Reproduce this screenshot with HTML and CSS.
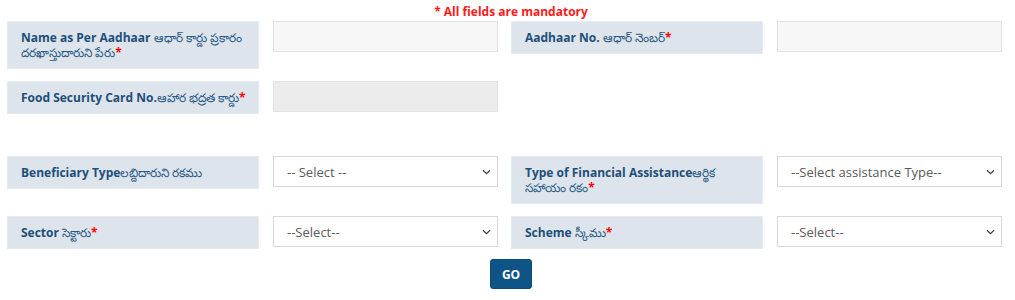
FILE: index.html
```html
<!DOCTYPE html>
<html>
<head>
<meta charset="utf-8">
<link rel="stylesheet" href="styles.css">
</head>
<body>
<div class="page">
  <div class="note">* All fields are mandatory</div>
  <div class="grid">
    <div class="label">Name as Per Aadhaar <span class="te">ఆధార్ కార్డు ప్రకారం దరఖాస్తుదారుని పేరు</span><span class="req">*</span></div>
    <div class="field"><input class="text" type="text"></div>
    <div class="label">Aadhaar No. <span class="te">ఆధార్ నెంబర్</span><span class="req">*</span></div>
    <div class="field"><input class="text" type="text"></div>

    <div class="label">Food Security Card No.<span class="te">ఆహార భద్రత కార్డు</span><span class="req">*</span></div>
    <div class="field"><input class="text disabled" type="text" disabled></div>
    <div class="empty"></div>
    <div class="empty"></div>

    <div class="spacer"></div>

    <div class="label">Beneficiary Type<span class="te">లబ్దిదారుని రకము</span></div>
    <div class="field"><select class="sel"><option>-- Select --</option></select></div>
    <div class="label">Type of Financial Assistance<span class="te">ఆర్థిక సహాయం రకం</span><span class="req">*</span></div>
    <div class="field"><select class="sel"><option>--Select assistance Type--</option></select></div>

    <div class="label">Sector <span class="te">సెక్టారు</span><span class="req">*</span></div>
    <div class="field"><select class="sel"><option>--Select--</option></select></div>
    <div class="label">Scheme <span class="te">స్కీము</span><span class="req">*</span></div>
    <div class="field"><select class="sel"><option>--Select--</option></select></div>
  </div>
  <div class="actions"><button class="go">GO</button></div>
</div>
</body>
</html>
```
FILE: styles.css
```css
html, body {
  margin: 0;
  padding: 0;
  background: #fff;
  font-family: "Open Sans", "Noto Sans", sans-serif;
}
.page {
  width: 1015px;
  padding: 4px 0 0 7px;
  box-sizing: border-box;
}
.note {
  width: 1008px;
  text-align: center;
  color: #ff1a1a;
  font-weight: 700;
  font-size: 12px;
  line-height: 16px;
}
.grid {
  margin-top: 1px;
  display: grid;
  grid-template-columns: 252px 224px 252px 225px;
  column-gap: 14px;
  row-gap: 12px;
  align-items: start;
}
.label {
  background: #dde4eb;
  border: 1px solid #e6ebf0;
  box-sizing: border-box;
  color: #1d4f79;
  font-weight: 700;
  font-size: 12px;
  line-height: 15px;
  padding: 8px 8px 8px 13px;
  min-height: 33px;
}
.label .te {
  font-weight: 400;
  font-size: 12px;
  color: #2a5a85;
}
.req { color: #f00; }
.field { height: 31px; }
.text {
  width: 225px;
  height: 31px;
  box-sizing: border-box;
  border: 1px solid #e2e2e2;
  background: #f7f7f7;
  margin: 0;
  padding: 0 10px;
  font-family: inherit;
}
.text.disabled { background: #ececec; }
.sel {
  width: 225px;
  height: 31px;
  box-sizing: border-box;
  border: 1px solid #d8d8d8;
  background: #fff;
  color: #5a5a5a;
  font-family: "Open Sans", sans-serif;
  font-size: 13px;
  padding: 0 13px;
  margin: 0;
  appearance: none;
  -webkit-appearance: none;
  background-image: url("data:image/svg+xml;utf8,<svg xmlns='http://www.w3.org/2000/svg' width='9' height='6' viewBox='0 0 9 6'><path d='M1 1.2l3.5 3.5 3.5-3.5' fill='none' stroke='%23444' stroke-width='1.3'/></svg>");
  background-repeat: no-repeat;
  background-position: right 6px center;
}
.spacer {
  grid-column: 1 / -1;
  height: 18px;
}
.actions {
  display: flex;
  justify-content: center;
  margin-top: 10px;
  width: 1008px;
}
.go {
  width: 42px;
  height: 30px;
  background: #0f5486;
  color: #fff;
  border: 1px solid #0c4a78;
  border-radius: 3px;
  font-family: "Open Sans", sans-serif;
  font-weight: 700;
  font-size: 12px;
  padding: 0;
}
```
